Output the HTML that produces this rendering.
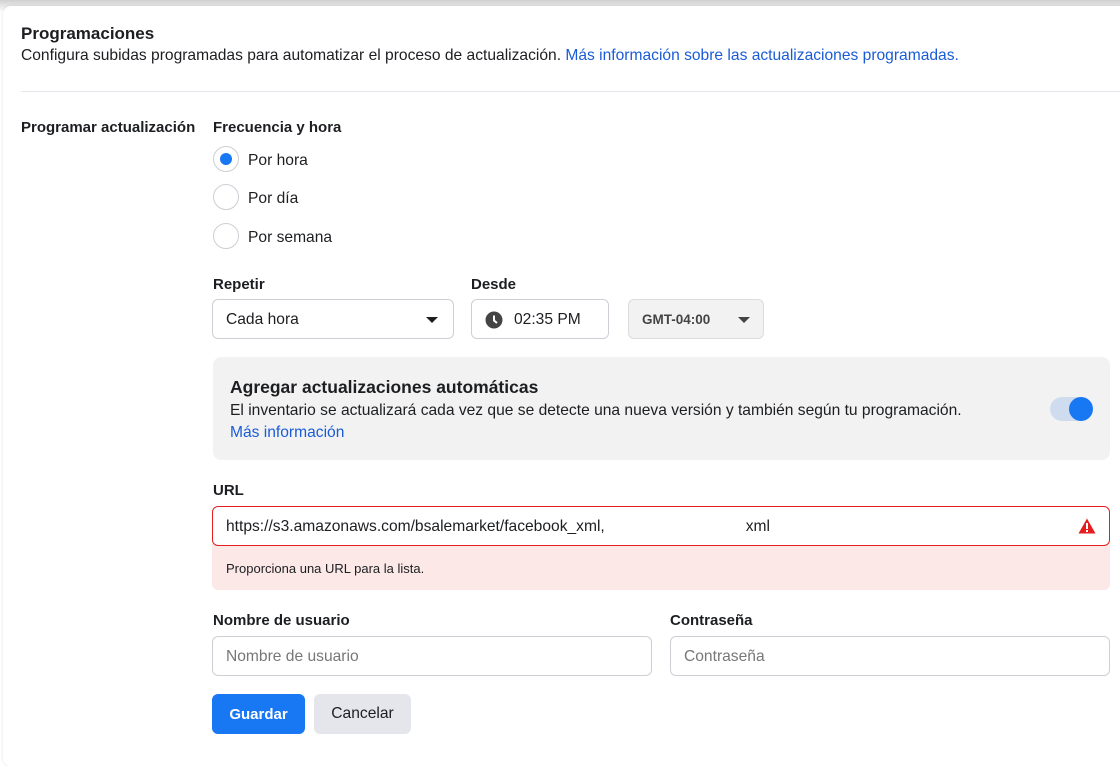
<!DOCTYPE html>
<html><head><meta charset="utf-8"><style>
*{box-sizing:border-box;margin:0;padding:0}
body{width:1120px;height:755px;overflow:hidden;background:#fff;font-family:"Liberation Sans",Arial,sans-serif;color:#1c1e21;position:relative}
.top{position:absolute;left:0;top:0;width:1120px;height:12px;background:linear-gradient(#d0d0d0,#fff)}
.card{position:absolute;left:3px;top:6px;width:1125px;height:760px;background:#fff;border-radius:8px;box-shadow:0 0 3px rgba(0,0,0,.12)}
.a{position:absolute;white-space:nowrap}
.b{font-weight:bold}
.t{font-size:15.6px}
.lbl{font-size:15px;font-weight:bold;color:#1c1e21}
.radio{position:absolute;left:213px;width:26px;height:26px;border:1px solid #ccd0d5;border-radius:50%;background:#fff}
.radio.on::after{content:"";position:absolute;left:6px;top:6px;width:12px;height:12px;border-radius:50%;background:#1877f2}
.box{position:absolute;border:1px solid #ccd0d5;border-radius:6px;background:#fff;font-size:15.6px;display:flex;align-items:center;padding-left:13px;padding-top:1px}
.tri{position:absolute;width:0;height:0;border-left:6px solid transparent;border-right:6px solid transparent;border-top:6px solid #1c1e21}
</style></head><body>
<div class="top"></div>
<div class="card"></div>
<div class="a b" style="left:21px;top:24px;font-size:17px">Programaciones</div>
<div class="a t" style="left:21px;top:47px">Configura subidas programadas para automatizar el proceso de actualización. <span style="color:#1a5bd6">Más información sobre las actualizaciones programadas.</span></div>
<div class="a" style="left:21px;top:91px;width:1099px;height:1px;background:#e4e6eb"></div>
<div class="a lbl" style="left:21px;top:119px">Programar actualización</div>
<div class="a lbl" style="left:213px;top:119px">Frecuencia y hora</div>
<div class="radio on" style="top:146px"></div><div class="a t" style="left:248px;top:152px">Por hora</div>
<div class="radio" style="top:184px"></div><div class="a t" style="left:248px;top:190px">Por día</div>
<div class="radio" style="top:223px"></div><div class="a t" style="left:248px;top:229px">Por semana</div>
<div class="a lbl" style="left:213px;top:276px">Repetir</div>
<div class="a lbl" style="left:471px;top:276px">Desde</div>
<div class="box" style="left:212px;top:299px;width:242px;height:40px">Cada hora<div class="tri" style="left:213px;top:17px"></div></div>
<div class="box" style="left:471px;top:299px;width:138px;height:40px">
<svg width="18" height="18" viewBox="0 0 18 18" style="margin-right:11px"><circle cx="9" cy="9" r="8.5" fill="#444"/><path d="M9 4.5V9.5L12 12" stroke="#fff" stroke-width="2" fill="none"/></svg>02:35 PM</div>
<div class="box" style="left:628px;top:299px;width:136px;height:40px;background:#f2f2f2;border-color:#dcdcdc;font-size:13.5px;font-weight:bold;color:#444">GMT-04:00<div class="tri" style="left:109px;top:17px;border-top-color:#444"></div></div>
<div class="a" style="left:213px;top:357px;width:897px;height:103px;background:#f2f2f2;border-radius:8px"></div>
<div class="a b" style="left:230px;top:377px;font-size:17.5px">Agregar actualizaciones automáticas</div>
<div class="a t" style="left:230px;top:402px">El inventario se actualizará cada vez que se detecte una nueva versión y también según tu programación.</div>
<div class="a t" style="left:230px;top:424px;color:#1a5bd6">Más información</div>
<div class="a" style="left:1050px;top:397px;width:42px;height:24px;border-radius:12px;background:#cfdcef"></div>
<div class="a" style="left:1069px;top:397px;width:24px;height:24px;border-radius:50%;background:#1877f2"></div>
<div class="a lbl" style="left:213px;top:482px">URL</div>
<div class="a" style="left:212px;top:543px;width:898px;height:47px;background:#fce8e7;border-radius:0 0 6px 6px"></div>
<div class="box" style="left:212px;top:506px;width:898px;height:40px;border-color:#e41e1e">https://s3.amazonaws.com/bsalemarket/facebook_xml,<span style="display:inline-block;width:141px"></span>xml
<svg width="18" height="16" viewBox="0 0 18 16" style="position:absolute;left:865px;top:11px"><path d="M9 0.5L17.5 15.5H0.5Z" fill="#e41e1e"/><rect x="8" y="5" width="2" height="6" fill="#fff"/><rect x="8" y="12" width="2" height="2" fill="#fff"/></svg></div>
<div class="a" style="left:226px;top:561px;font-size:13px">Proporciona una URL para la lista.</div>
<div class="a lbl" style="left:213px;top:612px">Nombre de usuario</div>
<div class="a lbl" style="left:670px;top:612px">Contraseña</div>
<div class="box" style="left:212px;top:636px;width:440px;height:40px;color:#777">Nombre de usuario</div>
<div class="box" style="left:670px;top:636px;width:440px;height:40px;color:#777">Contraseña</div>
<div class="a b" style="left:212px;top:694px;width:93px;height:40px;background:#1877f2;color:#fff;border-radius:6px;font-size:15px;display:flex;align-items:center;justify-content:center">Guardar</div>
<div class="a" style="left:314px;top:694px;width:97px;height:40px;background:#e4e6eb;border-radius:6px;font-size:15.6px;display:flex;align-items:center;justify-content:center">Cancelar</div>
</body></html>
